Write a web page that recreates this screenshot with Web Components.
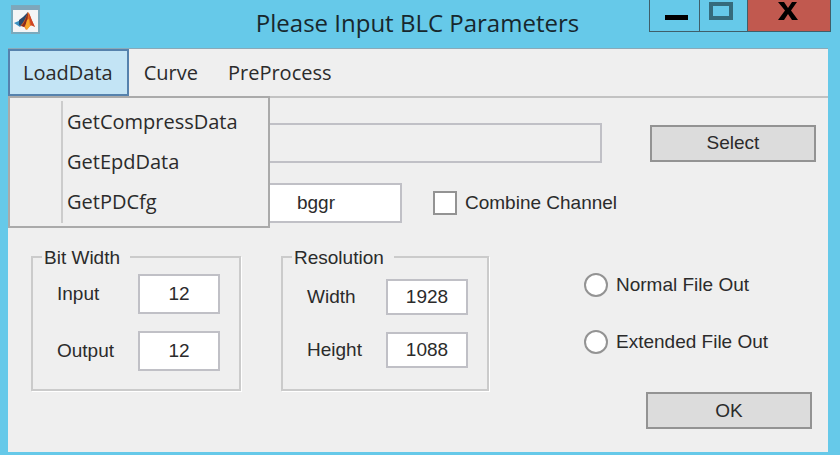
<!DOCTYPE html>
<html lang="en">
<head>
<meta charset="utf-8">
<title>Please Input BLC Parameters</title>
<style>
body{
    margin:0;
    background-color:#66c9e9;
    font-family:'Liberation Sans', Arial, sans-serif;
    font-size:19px;
    color:#2b2b2b;
}
</style>
</head>
<body>
<blc-window caption="Please Input BLC Parameters">
    <blc-menubar slot="menu"></blc-menubar>
    <blc-form></blc-form>
</blc-window>

<script>
const define = (name, html, setup) => {
    const template = document.createElement('template');
    template.innerHTML = html;

    customElements.define(name, class extends HTMLElement{
        constructor(){
            super();
            this.attachShadow({mode:'open'});
            this.shadowRoot.appendChild(template.content.cloneNode(true));
            if(setup) setup(this, this.shadowRoot);
        }
    });
};

// window frame with title bar
define('blc-window', `
<style>
:host{
    display:flex;
    flex-direction:column;
    min-height:100vh;
    box-sizing:border-box;
    padding:0 12px 3px 8px;
}
header{
    display:grid;
    grid-template-columns:1fr auto 1fr;
    height:48px;
    margin:0 -3px 0 0;
}
.logo{
    width:30px;
    height:30px;
    margin:5px 2px;
}
h1{
    margin:0;
    padding-right:4px;
    font:400 24px/46px 'Open Sans', 'Noto Sans', sans-serif;
    color:#17272d;
    white-space:nowrap;
}
.controls{
    display:flex;
    justify-self:end;
    height:32px;
    box-sizing:border-box;
    border:1px solid #3f5f6a;
    border-top:0;
}
button{
    display:flex;
    justify-content:center;
    width:48px;
    padding:0;
    border:0;
    border-right:1px solid #3f5f6a;
    background:none;
}
.minimize{
    width:50px;
}
.close{
    width:82px;
    border-right:0;
    background-color:#c1594f;
}
main{
    flex:1;
    background-color:#efefef;
    border-top:1px solid #8aa9b8;
}
</style>
<header>
    <svg class="logo" viewBox="0 0 30 30">
        <rect x="2" y="1" width="27" height="27" fill="#f4f5f6" stroke="#79aabd" stroke-width="2"/>
        <path d="M1 1h28v4H1z" fill="#7fa6ba"/>
        <path d="M4 18l7-3 3 3-4 4z" fill="#3a8fc0"/>
        <path d="M9 15l4-3 5-5-2 9-5 5-2-1z" fill="#28496d"/>
        <path d="M18 7c2 2 4 10 7 15-3-2-4-2-6 0l-3 3c-1-3-3-5-6-4 4-3 6-9 8-14z" fill="#e36b1e"/>
        <path d="M18 7c-2 5-3 11-7 14l3 1c3-3 4-9 4-15z" fill="#8c2b1c"/>
        <path d="M17 15l2-1 1 7-3 4-2-3z" fill="#f6a72c"/>
        <path d="M19 8c2 5 4 10 6 14l-4-2c-1-4-2-8-2-12z" fill="#cf4527"/>
    </svg>
    <h1></h1>
    <div class="controls">
        <button class="minimize" aria-label="Minimize"><svg width="49" height="31"><path d="M15 17.500h23" stroke="#000" stroke-width="5"/></svg></button>
        <button aria-label="Maximize"><svg width="47" height="31"><rect x="11" y="4" width="20" height="14" fill="none" stroke="#356b7c" stroke-width="4"/></svg></button>
        <button class="close" aria-label="Close"><svg width="82" height="31"><path d="M30 2h6l4 6 4-6h5l-6 8.500 7 9.500h-6l-4-6-4 6h-6l7-9.500z" fill="#000"/></svg></button>
    </div>
</header>
<main>
    <slot name="menu"></slot>
    <slot></slot>
</main>`, (el, root) => {
    root.querySelector('h1').textContent = el.getAttribute('caption');
});

// menu bar, LoadData is the open one
define('blc-menubar', `
<style>
:host{
    display:flex;
    height:47px;
    border-bottom:2px solid #c2c2c2;
    font:20px/24px 'Open Sans', 'Noto Sans', sans-serif;
}
div{
    position:relative;
    display:flex;
}
button{
    font:inherit;
    color:#2b2b2b;
    text-align:left;
    background:none;
    border:0;
    padding:0 15px;
}
.open{
    border:2px solid #5682ad;
    background-color:#c3e4f5;
    padding:0 14px 0 13px;
}
menu{
    position:absolute;
    top:100%;
    left:0;
    z-index:1;
    display:flex;
    flex-direction:column;
    width:262px;
    box-sizing:border-box;
    margin:0;
    padding:4px;
    list-style:none;
    background:#efefef linear-gradient(#ccc, #ccc) 51px center / 2px 122px no-repeat;
    border:2px solid #aaa;
}
li{
    display:flex;
}
li button{
    flex:1;
    height:40px;
    padding:0 0 0 53px;
}
</style>
<div>
    <button class="open" aria-expanded="true">LoadData</button>
    <menu>
        <li><button>GetCompressData</button></li>
        <li><button>GetEpdData</button></li>
        <li><button>GetPDCfg</button></li>
    </menu>
</div>
<button>Curve</button>
<button>PreProcess</button>`);

define('blc-button', `
<style>
:host{
    display:block;
    width:166px;
}
button{
    width:100%;
    height:37px;
    padding:0;
    font:inherit;
    color:inherit;
    background-color:#dcdcdc;
    border:2px solid #939393;
}
</style>
<button><slot></slot></button>`);

// label on the left, edit box on the right
define('blc-edit', `
<style>
:host{
    display:block;
}
label{
    display:flex;
    align-items:center;
    justify-content:space-between;
}
input{
    width:var(--edit-width, 82px);
    height:var(--edit-height, 40px);
    box-sizing:border-box;
    padding:0;
    font:inherit;
    color:inherit;
    text-align:center;
    background-color:#fff;
    border:2px solid #c0c0c6;
    border-radius:0;
}
input:read-only{
    background-color:#efefef;
}
</style>
<label><span></span><input type="text"></label>`, (el, root) => {
    const input = root.querySelector('input');
    root.querySelector('span').textContent = el.getAttribute('label');
    input.value = el.getAttribute('value') || '';
    input.readOnly = el.hasAttribute('readonly');
    if(el.hasAttribute('name')) input.setAttribute('aria-label', el.getAttribute('name'));
});

// check box or radio button
define('blc-option', `
<style>
:host{
    display:block;
}
label{
    display:flex;
    align-items:center;
    gap:8px;
    line-height:24px;
}
input{
    appearance:none;
    width:24px;
    height:24px;
    box-sizing:border-box;
    margin:0;
    background-color:#fff;
    border:2px solid #939393;
}
input[type=radio]{
    border-radius:50%;
}
</style>
<label><input><span></span></label>`, (el, root) => {
    root.querySelector('input').type = el.getAttribute('type');
    root.querySelector('span').textContent = el.getAttribute('label');
});

define('blc-group', `
<style>
:host{
    display:flex;
}
fieldset{
    display:flex;
    flex-direction:column;
    gap:17px;
    width:var(--group-width, 210px);
    box-sizing:border-box;
    min-width:0;
    margin:0;
    padding:var(--group-top, 6px) 19px 18px 24px;
    border:2px solid #cbcbcb;
    box-shadow:1px 1px 0 #fff;
}
legend{
    margin-left:-15px;
    padding:2px 10px 0 2px;
    line-height:20px;
}
</style>
<fieldset>
    <legend></legend>
    <slot></slot>
</fieldset>`, (el, root) => {
    root.querySelector('legend').textContent = el.getAttribute('label');
});

define('blc-form', `
<style>
:host{
    display:flex;
    flex-direction:column;
    padding:25px 12px 22px 23px;
}
.row{
    display:flex;
    align-items:center;
}
.path{
    flex:1;
    --edit-width:100%;
}
.file{
    gap:48px;
}
.pattern{
    gap:31px;
    margin:20px 0 23px;
    padding-left:199px;
    --edit-width:172px;
}
.params{
    align-items:flex-start;
    justify-content:space-between;
}
.groups{
    display:flex;
    gap:40px;
}
.resolution{
    --edit-height:36px;
    --group-top:11px;
    --group-width:208px;
}
.output{
    display:flex;
    flex-direction:column;
    gap:33px;
    width:228px;
    padding:27px 4px 0 0;
}
.output blc-button{
    align-self:flex-end;
    margin-top:5px;
}
</style>
<div class="row file">
    <blc-edit class="path" name="File path" readonly></blc-edit>
    <blc-button>Select</blc-button>
</div>
<div class="row pattern">
    <blc-edit name="Bayer pattern" value="bggr"></blc-edit>
    <blc-option type="checkbox" label="Combine Channel"></blc-option>
</div>
<div class="row params">
    <div class="groups">
        <blc-group label="Bit Width">
            <blc-edit label="Input" value="12"></blc-edit>
            <blc-edit label="Output" value="12"></blc-edit>
        </blc-group>
        <blc-group class="resolution" label="Resolution">
            <blc-edit label="Width" value="1928"></blc-edit>
            <blc-edit label="Height" value="1088"></blc-edit>
        </blc-group>
    </div>
    <div class="output">
        <blc-option type="radio" label="Normal File Out"></blc-option>
        <blc-option type="radio" label="Extended File Out"></blc-option>
        <blc-button>OK</blc-button>
    </div>
</div>`);
</script>
</body>
</html>
